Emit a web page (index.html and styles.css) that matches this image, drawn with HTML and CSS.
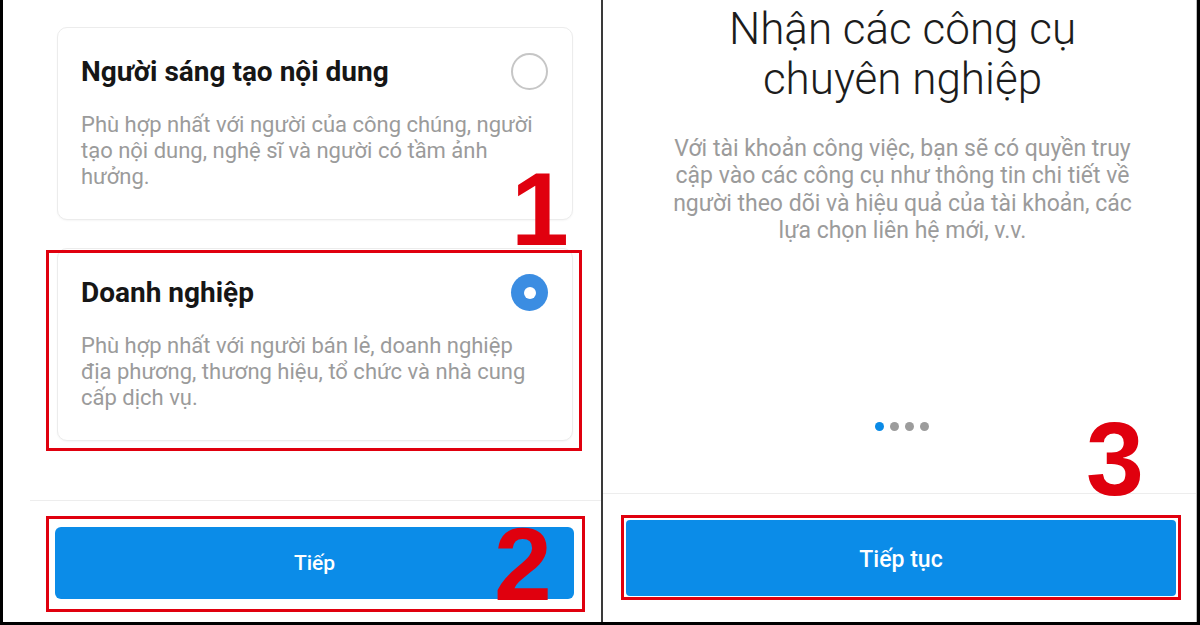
FILE: index.html
```html
<!DOCTYPE html>
<html lang="vi">
<head>
<meta charset="utf-8">
<title>Tài khoản chuyên nghiệp</title>
<link rel="stylesheet" href="styles.css">
</head>
<body>
<div class="frame">
  <section class="panel left">
    <div class="cards">
      <div class="card">
        <div class="card-head">
          <h2 class="card-title">Người sáng tạo nội dung</h2>
          <span class="radio"></span>
        </div>
        <p class="card-desc">Phù hợp nhất với người của công chúng, người<br>tạo nội dung, nghệ sĩ và người có tầm ảnh<br>hưởng.</p>
      </div>
      <div class="card annot annot-card">
        <div class="card-head">
          <h2 class="card-title">Doanh nghiệp</h2>
          <span class="radio checked"></span>
        </div>
        <p class="card-desc">Phù hợp nhất với người bán lẻ, doanh nghiệp<br>địa phương, thương hiệu, tổ chức và nhà cung<br>cấp dịch vụ.</p>
      </div>
    </div>
    <div class="footer footer-left">
      <div class="annot annot-btn2">
        <button class="btn btn-left">Tiếp</button>
      </div>
    </div>
    <span class="num n1">1</span>
    <span class="num n2">2</span>
  </section>
  <div class="split"></div>
  <section class="panel right">
    <h1 class="intro-title">Nhận các công cụ<br>chuyên nghiệp</h1>
    <p class="intro-desc">Với tài khoản công việc, bạn sẽ có quyền truy<br>cập vào các công cụ như thông tin chi tiết về<br>người theo dõi và hiệu quả của tài khoản, các<br>lựa chọn liên hệ mới, v.v.</p>
    <div class="dots">
      <span class="dot active"></span>
      <span class="dot"></span>
      <span class="dot"></span>
      <span class="dot"></span>
    </div>
    <div class="footer footer-right">
      <div class="annot annot-btn3">
        <button class="btn btn-right">Tiếp tục</button>
      </div>
    </div>
    <span class="num n3">3</span>
  </section>
</div>
</body>
</html>
```
FILE: styles.css
```css
* { box-sizing: border-box; }
html, body { margin: 0; padding: 0; background: #fff; }
body { font-family: Roboto, "Noto Sans", "Liberation Sans", sans-serif; }

.frame {
  width: 1200px;
  height: 625px;
  display: flex;
  border-left: 3px solid #000;
  border-right: 3px solid #000;
  border-bottom: 3px solid #000;
  background: #fff;
  overflow: hidden;
}

.panel {
  position: relative;
  display: flex;
  flex-direction: column;
  height: 622px;
}
.left { width: 598px; }
.split { width: 2px; background: #3a3a3a; height: 622px; }
.right { flex: 1; align-items: center; border-right: 1px solid #bdbdbd; }

/* cards */
.cards {
  padding: 27px 0 0 54px;
  display: flex;
  flex-direction: column;
  gap: 28px;
}
.card {
  position: relative;
  width: 516px;
  height: 193px;
  border: 1px solid #ececec;
  border-radius: 10px;
  box-shadow: 0 1px 2px rgba(0,0,0,0.04);
  padding: 25px 23px 0 23px;
  background: #fff;
}
.card-head {
  display: flex;
  align-items: center;
  justify-content: space-between;
  height: 37px;
  padding-right: 1px;
}
.card-title {
  margin: 0;
  font-size: 28px;
  font-weight: 700;
  color: #161616;
}
.radio {
  width: 37px;
  height: 37px;
  border-radius: 50%;
  border: 2px solid #c6c6c6;
  flex: none;
  display: flex;
  align-items: center;
  justify-content: center;
}
.radio.checked {
  border: none;
  background: #3b8de2;
}
.radio.checked::after {
  content: "";
  width: 12px;
  height: 12px;
  border-radius: 50%;
  background: #fff;
}
.card-desc {
  margin: 22px 0 0;
  font-size: 22px;
  line-height: 26px;
  color: #9b9b9b;
  white-space: nowrap;
}

/* annotation boxes */
.annot { position: relative; }
.annot-btn2, .annot-btn3 { width: fit-content; }
.annot::after {
  content: "";
  position: absolute;
  border: 3px solid #e0000e;
  pointer-events: none;
}
.annot-card::after { top: 1px; left: -12px; right: -10px; bottom: -11px; }
.annot-btn2::after { top: -11px; left: -9px; right: -11px; bottom: -13px; }
.annot-btn3::after { top: -5px; left: -5px; right: -5px; bottom: -4px; }

/* footers */
.footer {
  margin-top: auto;
  border-top: 1px solid #ededed;
}
.footer-left {
  margin-left: 27px;
  padding: 26px 0 23px 25px;
}
.footer-right {
  margin-top: 0;
  width: 100%;
  padding: 26px 0 26px 23px;
}
.btn {
  display: flex;
  align-items: center;
  justify-content: center;
  border: none;
  background: #0b8ce8;
  color: #fff;
  font-family: Roboto, "Noto Sans", sans-serif;
  font-weight: 500;
  padding: 0;
  margin: 0;
}
.btn-left {
  width: 519px;
  height: 72px;
  border-radius: 6px;
  font-size: 21px;
}
.btn-right {
  width: 550px;
  height: 76px;
  border-radius: 4px;
  font-size: 23px;
  padding-top: 3px;
}

/* right panel content */
.intro-title {
  margin: 4px 0 0;
  padding-left: 6px;
  font-size: 44px;
  line-height: 50px;
  font-weight: 300;
  color: #1c1c1c;
  text-align: center;
}
.intro-desc {
  margin: 31px 0 0;
  padding-left: 6px;
  font-size: 23px;
  line-height: 27.3px;
  color: #9b9b9b;
  text-align: center;
  white-space: nowrap;
}
.dots {
  margin-top: auto;
  margin-bottom: 62px;
  display: flex;
  gap: 6px;
  padding-left: 4px;
}
.dot {
  width: 9px;
  height: 9px;
  border-radius: 50%;
  background: #9c9c9c;
}
.dot.active { background: #0a8ae6; }

/* annotation numerals */
.num {
  position: absolute;
  font-family: "Liberation Sans", Arial, sans-serif;
  font-weight: 700;
  font-size: 104px;
  line-height: 1;
  color: #e0000e;
}
.n1 { left: 508px; top: 157px; }
.n2 { left: 491px; top: 512px; }
.n3 { left: 483px; top: 407px; }
```
